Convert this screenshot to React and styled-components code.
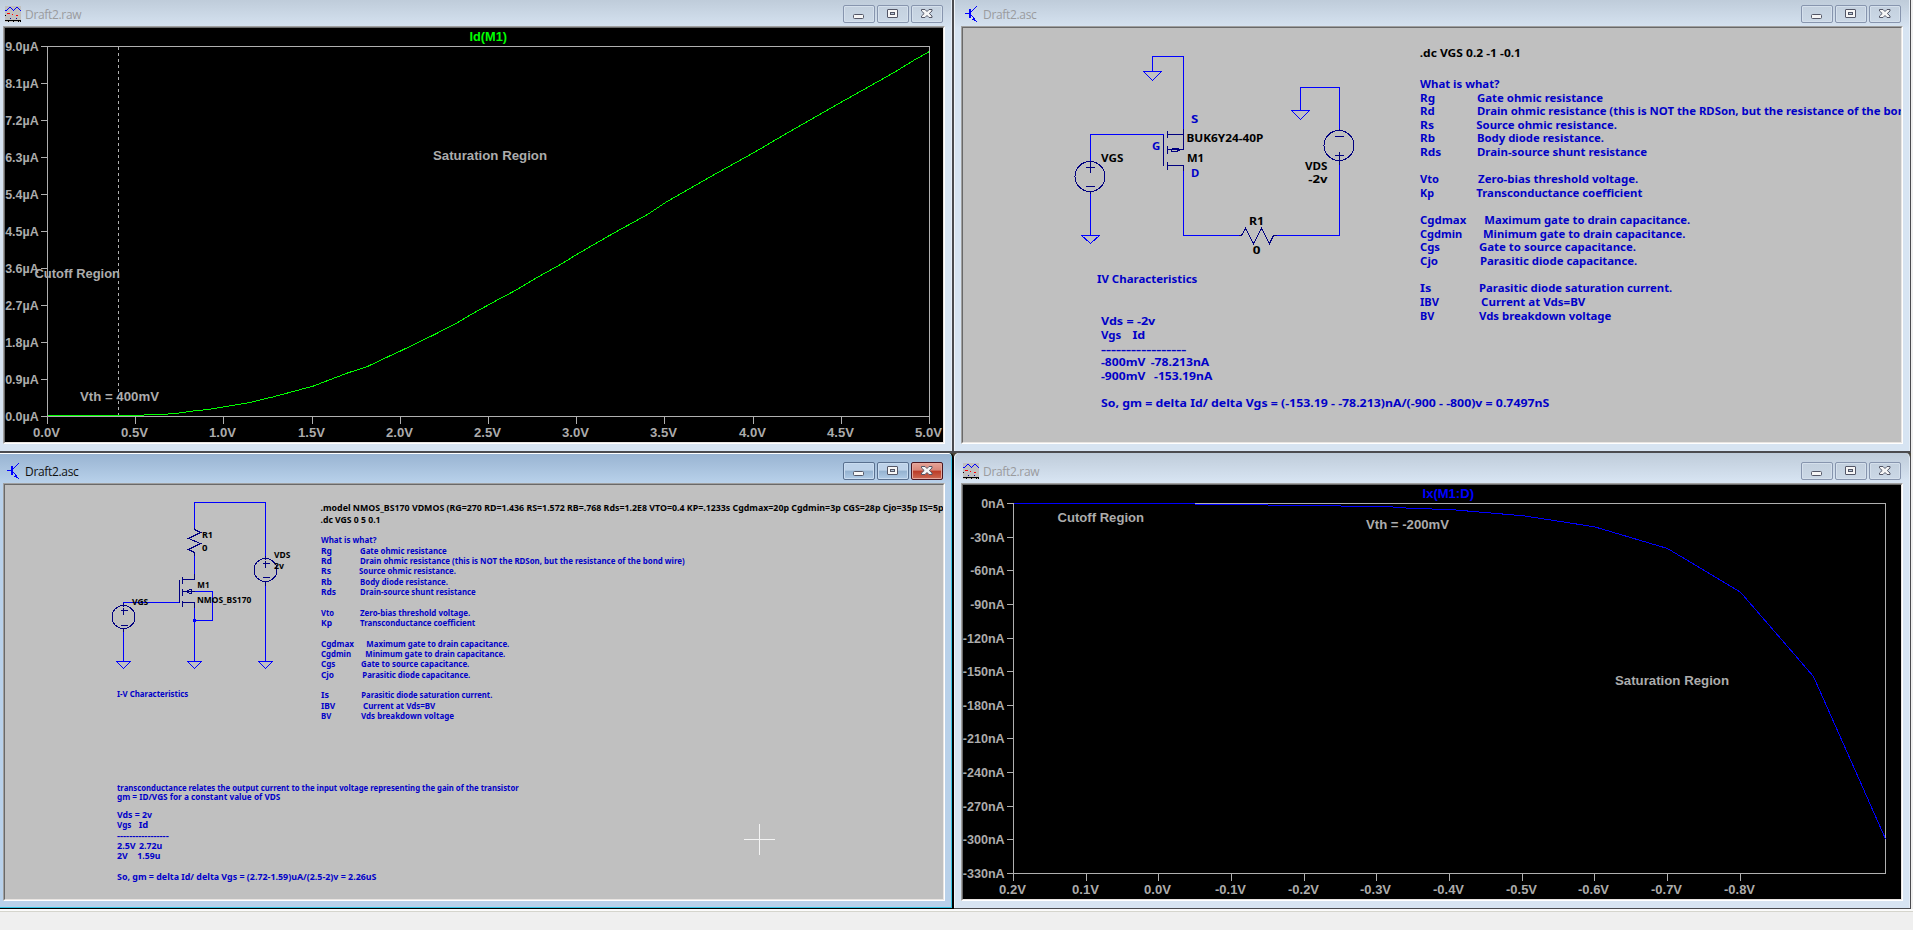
import React from "react";
import styled, { createGlobalStyle, css } from "styled-components";

const GlobalStyle = createGlobalStyle`
  html, body { margin: 0; padding: 0; }
  body { background: #efefef; overflow: hidden; }
  * { box-sizing: border-box; }
`;

/* ---------- window chrome ---------- */

const Screen = styled.div`
  width: 1913px;
  height: 930px;
  display: flex;
  flex-direction: column;
  background: #efefef;
`;

const Desktop = styled.main`
  display: grid;
  grid-template-columns: 954px 957px;
  grid-template-rows: 453px 456px;
  width: 1911px;
  background: #4c4739;
`;

const StatusBar = styled.footer`
  flex: 1;
  border-top: 2px solid #fbfbfb;
  background: #efefef;
  &::before {
    content: "";
    display: block;
    height: 1px;
    background: #d5d5cd;
  }
`;

const activeFrame = css`
  background: linear-gradient(#98b3d1 0, #b4cde7 26px, #b9d1ea 30px);
  border-color: #000;
`;

const inactiveFrame = css`
  background: linear-gradient(#bfccda 0, #d3e0ee 24px, #d7e4f2 28px);
  border-color: #4b4b4f;
`;

const Frame = styled.section`
  display: flex;
  flex-direction: column;
  min-width: 0;
  min-height: 0;
  padding-left: ${(p) => (p.$side === "left" ? 3 : 7)}px;
  padding-right: 7px;
  border-style: solid;
  border-width: 0
    ${(p) => (p.$side === "left" ? 2 : 1)}px
    ${(p) => (p.$row === "top" ? 2 : 1)}px 0;
  ${(p) => (p.$active ? activeFrame : inactiveFrame)}
  border-radius: ${(p) => (p.$row === "top" ? "0" : p.$side === "left" ? "0 5px 0 0" : "5px 5px 0 0")};
  box-shadow: ${(p) =>
    p.$active
      ? "inset 0 1px #fff, inset -1px 0 #35c6e4, inset 0 -1px #35c6e4"
      : p.$side === "left"
      ? "inset -1px 0 #e6eef7"
      : "inset 1px 0 #f0f4f8, inset -1px 0 #e6eef7"};
`;

const TitleBar = styled.header`
  display: flex;
  align-items: flex-end;
  flex: 0 0 ${(p) => (p.$row === "top" ? 26 : 30)}px;
  padding: 0 2px 3px;
`;

const IconBox = styled.div`
  width: 16px;
  height: 16px;
  margin-bottom: 1px;
  svg { display: block; }
`;

const Title = styled.h1`
  flex: 1;
  margin: 0 0 1px 4px;
  font: 400 12px/14px "Open Sans", "Noto Sans", sans-serif;
  letter-spacing: -0.32px;
  color: ${(p) => (p.$active ? "#101010" : "#9a9b9e")};
`;

const Buttons = styled.div`
  display: flex;
  gap: 2px;
`;

const WinButton = styled.button`
  display: flex;
  align-items: center;
  justify-content: center;
  width: 32px;
  height: 18px;
  padding: 0;
  border-radius: 2px;
  border: 1px solid #8795ae;
  background: linear-gradient(#c3d0de, #cbd8e6);
  box-shadow: inset 0 0 0 1px #d5e0ec;
  ${(p) => p.$active && css`
    border-color: #59708f;
    background: linear-gradient(#bdd2e9 0 45%, #94b2d0 50%, #b0cbe6);
    box-shadow: inset 0 0 0 1px #c9dcf0;
  `}
  ${(p) => p.$danger && css`
    border-color: #4b1620;
    background: linear-gradient(#e6a397 0, #d8877a 45%, #bb3a26 50%, #cc6a54);
    box-shadow: inset 0 0 0 1px #e5a79c;
  `}
`;

const Client = styled.div`
  flex: 0 0 418px;
  width: 942px;
  border: 1px solid;
  border-color: #a0a0a0 #fff #fff #a0a0a0;
`;

const Inner = styled.div`
  width: 940px;
  height: 416px;
  border: 1px solid;
  border-color: #696969 #e9e5e2 #e9e5e2 #696969;
  background: ${(p) => (p.$dark ? "#000" : "#c0c0c0")};
`;

const Canvas = styled.svg`
  display: block;
  width: 938px;
  height: 414px;
  shape-rendering: crispEdges;
  overflow: hidden;
`;

/* ---------- drawing primitives ---------- */

const PlotText = styled.text`
  font: 700 13px "Liberation Sans", Arial, sans-serif;
  fill: ${(p) => p.$color || "#acacac"};
`;

const Axis = styled.path`
  fill: none;
  stroke: #b0b0b0;
  stroke-width: 1;
  stroke-dasharray: ${(p) => (p.$dashed ? "3 3" : "none")};
`;

const Trace = styled.polyline`
  fill: none;
  stroke: ${(p) => p.$color};
  stroke-width: 1;
`;

const Wire = styled.path`
  fill: none;
  stroke: #0000ff;
  stroke-width: 1;
`;

const Part = styled.path`
  fill: none;
  stroke: #000080;
  stroke-width: 1;
`;

const SchText = styled.text`
  font-family: "Noto Sans", "DejaVu Sans Condensed", sans-serif;
  font-weight: 700;
  font-size: ${(p) => p.$size}px;
  fill: ${(p) => (p.$black ? "#000" : "#0000c8")};
`;

function Fit({ as: Text = SchText, x, to, y, children, ...rest }) {
  return (
    <Text x={x} y={y} textLength={to - x} lengthAdjust="spacingAndGlyphs" {...rest}>
      {children}
    </Text>
  );
}

function Source({ x, y, r, arm, plus, minus }) {
  return (
    <g transform="translate(.5 .5)">
      <Part as="circle" cx={x} cy={y} r={r} fill="none" stroke="#000080" />
      <Part d={`M${x - arm} ${plus}h${arm * 2 + 1}M${x} ${plus - arm}v${arm * 2 + 1}M${x - arm} ${minus}h${arm * 2 + 1}`} />
    </g>
  );
}

const Ground = ({ x, y, w, h }) => (
  <Wire transform="translate(.5 .5)" d={`M${x - w} ${y}H${x + w}L${x} ${y + h}Z`} />
);

/* ---------- icons ---------- */

const Pixels = ({ at, color }) => (
  <path d={at.map(([x, y, w = 1, h = 1]) => `M${x} ${y}h${w}v${h}h${-w}z`).join("")} fill={color} />
);

const WAVE = [4, 4, 3, 2, 1, 1, 2, 3, 4, 3, 2, 1, 1, 2, 3, 4].map((y, x) => [x, y]);

const WaveIcon = () => (
  <svg width="16" height="16" shapeRendering="crispEdges">
    <rect width="16" height="16" fill="#c0c0c0" />
    <Pixels at={WAVE} color="#0000ff" />
    <Pixels at={[[2, 7, 3], [7, 8], [11, 9, 2]]} color="#ff0000" />
    <Pixels at={[[0, 9], [0, 14, 16], [3, 15], [8, 15], [13, 15], [15, 15]]} color="#000" />
    <Pixels at={[[5, 12], [11, 12]]} color="#0000a0" />
  </svg>
);

const TransistorIcon = () => (
  <svg width="16" height="16" shapeRendering="crispEdges">
    <Pixels
      color="#0000ff"
      at={[
        [2, 7, 4], [6, 3, 2, 9],
        [8, 5], [9, 4], [10, 3], [11, 2], [12, 1], [13, 0],
        [8, 9], [9, 10], [10, 11, 1, 2], [9, 13, 3], [11, 12, 1, 3], [12, 14], [13, 15],
      ]}
    />
  </svg>
);

const MinGlyph = () => (
  <svg width="12" height="12">
    <rect x="0.500" y="6.500" width="10" height="4" rx="1" fill="#f6f6f6" stroke="#535666" />
  </svg>
);

const MaxGlyph = () => (
  <svg width="12" height="12">
    <rect x="0.500" y="1.500" width="10" height="8" rx=".5" fill="#f6f6f6" stroke="#535666" />
    <rect x="3.500" y="4.500" width="4" height="2" fill="#b9c8d8" stroke="#535666" />
  </svg>
);

const CloseGlyph = () => (
  <svg width="14" height="12">
    <path d="M1.500 1.500h3.500L7 3.500L9 1.500h3v1.500L9.300 5.500L12 8v1.500H9L7 7.500L5 9.500H1.500V8L4.200 5.500L1.500 3z" fill="#f6f6f6" stroke="#535666" />
  </svg>
);

function MdiWindow({ title, kind, side, row, active, children }) {
  return (
    <Frame $side={side} $row={row} $active={active}>
      <TitleBar $row={row}>
        <IconBox>{kind === "plot" ? <WaveIcon /> : <TransistorIcon />}</IconBox>
        <Title $active={active}>{title}</Title>
        <Buttons>
          <WinButton $active={active} aria-label="Minimize"><MinGlyph /></WinButton>
          <WinButton $active={active} aria-label="Restore"><MaxGlyph /></WinButton>
          <WinButton $active={active} $danger={active} aria-label="Close"><CloseGlyph /></WinButton>
        </Buttons>
      </TitleBar>
      <Client>
        <Inner $dark={kind === "plot"}>{children}</Inner>
      </Client>
    </Frame>
  );
}

/* ---------- plots ---------- */

const yLabelWidth = (t) => {
  if (t.includes("µ")) return 33.5;
  return { 3: 23.5, 5: 34.5, 6: 42 }[t.length];
};

function PlotAxes({ x0, y0, x1, y1, xTicks, yTicks, xStep, yStep, labelRight }) {
  return (
    <>
      <g transform="translate(.5 .5)">
        <Axis d={`M${x0} ${y0}H${x1}V${y1}H${x0}Z`} />
        {xTicks.map((t, i) => (
          <Axis key={t} d={`M${x0 + Math.round(i * xStep)} ${y1}v7`} />
        ))}
        {yTicks.map((t, i) => (
          <Axis key={t} d={`M${x0 - 7} ${y0 + Math.round(i * yStep)}h7`} />
        ))}
      </g>
      {xTicks.map((t, i) => {
        const w = t.startsWith("-") ? 31 : 27;
        const cx = x0 + Math.round(i * xStep) - 0.5;
        return (
          <Fit as={PlotText} key={t} x={cx - w / 2} to={cx + w / 2} y={y1 + 21}>{t}</Fit>
        );
      })}
      {yTicks.map((t, i) => (
        <Fit
          as={PlotText}
          key={t}
          x={labelRight - yLabelWidth(t)}
          to={labelRight}
          y={y0 + Math.round(i * yStep) + 5}
        >
          {t}
        </Fit>
      ))}
    </>
  );
}

const ID_POINTS =
  "47,415 143,415 144,414 161,414 175,413 193,410.500 207,409 223,406.500 247,402.500 273,396.300 313,385.500 347,372.500 367,366 383,358.300 400,350.500 433,334.500 455,323.300 473,312.600 499,298.300 513,291 540,275 560,264 577,253.500 613,232.700 647,214 665,202 718,171.700 753,152.300 788,131.800 842,101 893,72.300 913,60 929,51";

const IX_POINTS =
  "1013,503 1194,503 1195,504 1267,504 1268,505 1340,505 1341,506 1388,506 1400,507.300 1453,509.300 1523,515.300 1594,526.300 1667,548 1740,591.700 1813,676 1885,838.300";

function IdPlot() {
  return (
    <Canvas viewBox="5 28 938 414">
      <PlotAxes
        x0={47} y0={46} x1={929} y1={416} xStep={88.2} yStep={37} labelRight={38.7}
        xTicks={["0.0V", "0.5V", "1.0V", "1.5V", "2.0V", "2.5V", "3.0V", "3.5V", "4.0V", "4.5V", "5.0V"]}
        yTicks={["9.0µA", "8.1µA", "7.2µA", "6.3µA", "5.4µA", "4.5µA", "3.6µA", "2.7µA", "1.8µA", "0.9µA", "0.0µA"]}
      />
      <Axis $dashed d="M118.500 47V416" />
      <Trace $color="#00ff00" points={ID_POINTS} transform="translate(.5 .5)" />
      <Fit as={PlotText} $color="#00ff00" x={469.5} to={507} y={41}>Id(M1)</Fit>
      <Fit as={PlotText} x={433} to={547} y={160}>Saturation Region</Fit>
      <Fit as={PlotText} x={34.5} to={120} y={278}>Cutoff Region</Fit>
      <Fit as={PlotText} x={80} to={159} y={401}>Vth = 400mV</Fit>
    </Canvas>
  );
}

function IxPlot() {
  return (
    <Canvas viewBox="963 485 938 414">
      <PlotAxes
        x0={1013} y0={503} x1={1885} y1={873} xStep={72.67} yStep={33.636} labelRight={1004.7}
        xTicks={["0.2V", "0.1V", "0.0V", "-0.1V", "-0.2V", "-0.3V", "-0.4V", "-0.5V", "-0.6V", "-0.7V", "-0.8V"]}
        yTicks={["0nA", "-30nA", "-60nA", "-90nA", "-120nA", "-150nA", "-180nA", "-210nA", "-240nA", "-270nA", "-300nA", "-330nA"]}
      />
      <Trace $color="#0000ff" points={IX_POINTS} transform="translate(.5 .5)" />
      <Fit as={PlotText} $color="#0000ff" x={1422.5} to={1474} y={498}>Ix(M1:D)</Fit>
      <Fit as={PlotText} x={1057.5} to={1144} y={522}>Cutoff Region</Fit>
      <Fit as={PlotText} x={1366} to={1449} y={529}>Vth = -200mV</Fit>
      <Fit as={PlotText} x={1615} to={1729} y={685}>Saturation Region</Fit>
    </Canvas>
  );
}

/* ---------- schematics ---------- */

/* label, label end, description start, description end, text, baseline */
const PMOS_NOTES = [
  ["Rg", 1435, 1477, 1603, "Gate ohmic resistance", 102],
  ["Rd", 1434.7, 1477, 1943.7, "Drain ohmic resistance (this is NOT the RDSon, but the resistance of the bond wire)", 115],
  ["Rs", 1434, 1476.3, 1617, "Source ohmic resistance.", 129],
  ["Rb", 1435, 1477, 1604, "Body diode resistance.", 142],
  ["Rds", 1441.3, 1477, 1647, "Drain-source shunt resistance", 156],
  ["Vto", 1439, 1478, 1638.3, "Zero-bias threshold voltage.", 183],
  ["Kp", 1434, 1476.3, 1642.3, "Transconductance coefficient", 197],
  ["Cgdmax", 1466.3, 1484.3, 1690.3, "Maximum gate to drain capacitance.", 224],
  ["Cgdmin", 1462.3, 1483, 1685.3, "Minimum gate to drain capacitance.", 238],
  ["Cgs", 1440, 1479, 1636, "Gate to source capacitance.", 251],
  ["Cjo", 1438, 1480, 1637.3, "Parasitic diode capacitance.", 265],
  ["Is", 1431.3, 1479, 1672.3, "Parasitic diode saturation current.", 292],
  ["IBV", 1439, 1481, 1585.3, "Current at Vds=BV", 306],
  ["BV", 1434.3, 1479, 1611.3, "Vds breakdown voltage", 320],
];

const NMOS_NOTES = [
  ["Rg", 332, 360, 446.7, "Gate ohmic resistance", 554],
  ["Rd", 332, 360, 684.7, "Drain ohmic resistance (this is NOT the RDSon, but the resistance of the bond wire)", 564],
  ["Rs", 331, 359, 456, "Source ohmic resistance.", 574],
  ["Rb", 332, 360, 448, "Body diode resistance.", 585],
  ["Rds", 336, 360, 475.7, "Drain-source shunt resistance", 595],
  ["Vto", 334, 360, 470.3, "Zero-bias threshold voltage.", 616],
  ["Kp", 332, 360, 475.3, "Transconductance coefficient", 626],
  ["Cgdmax", 354, 366.3, 509.3, "Maximum gate to drain capacitance.", 647],
  ["Cgdmin", 351, 365.3, 505.3, "Minimum gate to drain capacitance.", 657],
  ["Cgs", 335.3, 361, 469.3, "Gate to source capacitance.", 667],
  ["Cjo", 334, 362.3, 470.3, "Parasitic diode capacitance.", 678],
  ["Is", 329, 361.3, 492.3, "Parasitic diode saturation current.", 698],
  ["IBV", 335.3, 363, 435.3, "Current at Vds=BV", 709],
  ["BV", 331.3, 361, 454, "Vds breakdown voltage", 719],
];

const Notes = ({ x, rows, size }) =>
  rows.map(([label, labelEnd, start, end, text, y]) => (
    <g key={label}>
      <Fit $size={size} x={x} to={labelEnd} y={y}>{label}</Fit>
      <Fit $size={size} x={start} to={end} y={y}>{text}</Fit>
    </g>
  ));

function PmosSchematic() {
  const s = 11.3;
  return (
    <Canvas viewBox="963 28 938 414">
      <g transform="translate(.5 .5)">
        <Wire d="M1152 71V56H1183V128M1163 134H1090V160M1090 192V235M1183 170V235H1238M1276 235H1339V164M1339 128V87H1300V110" />
        <Part d="M1183 128V149H1171M1163 134V165M1167 130V137M1167 145V153M1167 161V169M1167 134H1183M1167 149H1171M1171 148V151M1171 148H1176L1180 149L1176 151H1171M1167 165H1183V170M1090 160V163M1090 191V193M1339 128V130M1339 151V164" />
        <Part d="M1238 235H1241L1245 228L1253 243L1261 228L1269 243L1273 235H1276" />
      </g>
      <Ground x={1152} y={71} w={9} h={9} />
      <Ground x={1300} y={110} w={9} h={9} />
      <Ground x={1090} y={235} w={9} h={8} />
      <Source x={1089.5} y={176} r={15} arm={4} plus={167} minus={186} />
      <Source x={1338.5} y={145} r={15} arm={4} plus={155} minus={136} />

      <Fit $size={s} $black x={1101} to={1123.3} y={162}>VGS</Fit>
      <Fit $size={s} x={1191} to={1198.3} y={123}>S</Fit>
      <Fit $size={s} x={1152} to={1160.300} y={150}>G</Fit>
      <Fit $size={s} x={1191} to={1199.300} y={177}>D</Fit>
      <Fit $size={s} $black x={1186.500} to={1263.300} y={142}>BUK6Y24-40P</Fit>
      <Fit $size={s} $black x={1187} to={1204} y={162}>M1</Fit>
      <Fit $size={s} $black x={1305} to={1327.500} y={170}>VDS</Fit>
      <Fit $size={s} $black x={1308.300} to={1327.500} y={183}>-2v</Fit>
      <Fit $size={s} $black x={1249} to={1264} y={225}>R1</Fit>
      <Fit $size={s} $black x={1252.800} to={1260.500} y={254}>0</Fit>

      <Fit $size={s} x={1097} to={1197.300} y={283}>IV Characteristics</Fit>
      <Fit $size={s} x={1101} to={1155.300} y={325}>Vds = -2v</Fit>
      <Fit $size={s} x={1101} to={1121.300} y={339}>Vgs</Fit>
      <Fit $size={s} x={1132.500} to={1145.300} y={339}>Id</Fit>
      <Fit $size={s} x={1101} to={1186.300} y={353}>-----------------</Fit>
      <Fit $size={s} x={1101} to={1145.300} y={366}>-800mV</Fit>
      <Fit $size={s} x={1150.700} to={1209.300} y={366}>-78.213nA</Fit>
      <Fit $size={s} x={1101} to={1145.300} y={380}>-900mV</Fit>
      <Fit $size={s} x={1154} to={1212.300} y={380}>-153.19nA</Fit>
      <Fit $size={s} x={1101} to={1549.300} y={407}>So, gm = delta Id/ delta Vgs = (-153.19 - -78.213)nA/(-900 - -800)v = 0.7497nS</Fit>

      <Fit $size={s} $black x={1419.700} to={1521} y={57}>.dc VGS 0.2 -1 -0.1</Fit>
      <Fit $size={s} x={1420} to={1499.500} y={88}>What is what?</Fit>
      <Notes x={1420} rows={PMOS_NOTES} size={s} />
    </Canvas>
  );
}

function NmosSchematic() {
  const s = 8.7;
  return (
    <Canvas viewBox="5 485 938 414">
      <g transform="translate(.5 .5)">
        <Wire d="M194 528V502H265V555M194 555V573M194 591H212V620H194M194 607V661M123 605V602H179M123 631V661M265 584V661" />
        <Part d="M194 527V529L200 532L188 538L200 543L188 549L194 552V555M194 573V579H182M179 579V602M182 576V583M182 588V595M182 600V606M182 591H194M185 591L190 589H191V593H190L185 591M182 602H194V607M123 602V606M123 628V631M265 555V559M265 581V585" />
      </g>
      <rect x="193" y="619" width="3" height="3" fill="#0000ff" />
      <Ground x={123} y={661} w={7} h={7} />
      <Ground x={194} y={661} w={7} h={7} />
      <Ground x={265} y={661} w={7} h={7} />
      <Source x={123} y={616.5} r={11.5} arm={3} plus={610} minus={625} />
      <Source x={265} y={569.5} r={11.5} arm={3} plus={563} minus={577} />

      <Fit $size={s} $black x={202} to={213} y={538}>R1</Fit>
      <Fit $size={s} $black x={202} to={207.500} y={551}>0</Fit>
      <Fit $size={s} $black x={274} to={290.300} y={558}>VDS</Fit>
      <Fit $size={s} $black x={274} to={284} y={569}>2v</Fit>
      <Fit $size={s} $black x={197.300} to={209.500} y={588}>M1</Fit>
      <Fit $size={s} $black x={197} to={251.300} y={603}>NMOS_BS170</Fit>
      <Fit $size={s} $black x={132} to={148.300} y={605}>VGS</Fit>

      <Fit $size={s} $black x={320.500} to={943.500} y={511}>
        .model NMOS_BS170 VDMOS (RG=270 RD=1.436 RS=1.572 RB=.768 Rds=1.2E8 VTO=0.4 KP=.1233s Cgdmax=20p Cgdmin=3p CGS=28p Cjo=35p IS=5p
      </Fit>
      <Fit $size={s} $black x={320.500} to={380.500} y={523}>.dc VGS 0 5 0.1</Fit>
      <Fit $size={s} x={321} to={376.500} y={543}>What is what?</Fit>
      <Notes x={321} rows={NMOS_NOTES} size={s} />

      <Fit $size={s} x={117} to={188.300} y={697}>I-V Characteristics</Fit>
      <Fit $size={s} x={117} to={518.700} y={791}>transconductance relates the output current to the input voltage representing the gain of the transistor</Fit>
      <Fit $size={s} x={117} to={280.300} y={800}>gm = ID/VGS for a constant value of VDS</Fit>
      <Fit $size={s} x={117} to={152} y={818}>Vds = 2v</Fit>
      <Fit $size={s} x={117} to={131.300} y={828}>Vgs</Fit>
      <Fit $size={s} x={138.700} to={148.300} y={828}>Id</Fit>
      <Fit $size={s} x={117} to={168.700} y={839}>-----------------</Fit>
      <Fit $size={s} x={117} to={135.700} y={849}>2.5V</Fit>
      <Fit $size={s} x={139} to={162.300} y={849}>2.72u</Fit>
      <Fit $size={s} x={117} to={127.700} y={859}>2V</Fit>
      <Fit $size={s} x={137.300} to={160.300} y={859}>1.59u</Fit>
      <Fit $size={s} x={117} to={376.500} y={880}>So, gm = delta Id/ delta Vgs = (2.72-1.59)uA/(2.5-2)v = 2.26uS</Fit>

      <path d="M744 839.500H775M759.500 824V855" stroke="#f4f4f4" fill="none" />
    </Canvas>
  );
}

export default function App() {
  return (
    <Screen>
      <GlobalStyle />
      <Desktop>
        <MdiWindow title="Draft2.raw" kind="plot" side="left" row="top"><IdPlot /></MdiWindow>
        <MdiWindow title="Draft2.asc" kind="schematic" side="right" row="top"><PmosSchematic /></MdiWindow>
        <MdiWindow title="Draft2.asc" kind="schematic" side="left" row="bottom" active><NmosSchematic /></MdiWindow>
        <MdiWindow title="Draft2.raw" kind="plot" side="right" row="bottom"><IxPlot /></MdiWindow>
      </Desktop>
      <StatusBar />
    </Screen>
  );
}
